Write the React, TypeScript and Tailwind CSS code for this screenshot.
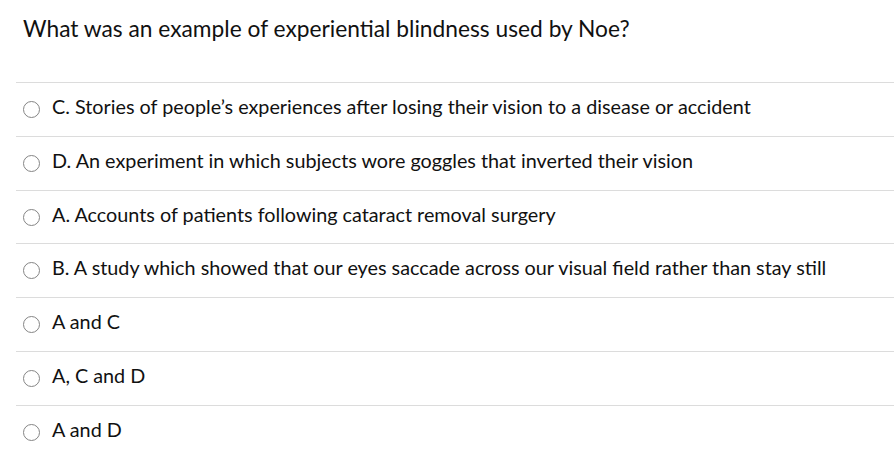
const options = [
  'C. Stories of people\u2019s experiences after losing their vision to a disease or accident',
  'D. An experiment in which subjects wore goggles that inverted their vision',
  'A. Accounts of patients following cataract removal surgery',
  'B. A study which showed that our eyes saccade across our visual field rather than stay still',
  'A and C',
  'A, C and D',
  'A and D',
]

export default function App() {
  return (
    <div className="w-[894px] h-[459px] overflow-hidden bg-white pl-4" style={{ fontFamily: 'Lato, "Open Sans", sans-serif' }}>
      <div className="pl-[7px] pt-[15px] h-[82px] text-[22.75px] leading-[27px] text-[#111]">
        What was an example of experiential blindness used by Noe?
      </div>
      {options.map((o) => (
        <div key={o} className="flex items-center h-[53.83px] border-t border-[#dcdcdc] pl-[7px]">
          <span className="w-[17px] h-[17px] rounded-full border-[1.6px] border-[#858585] shrink-0" />
          <span className="ml-[12px] text-[19.8px] leading-[24px] text-[#111] pb-[7px]">{o}</span>
        </div>
      ))}
    </div>
  )
}
